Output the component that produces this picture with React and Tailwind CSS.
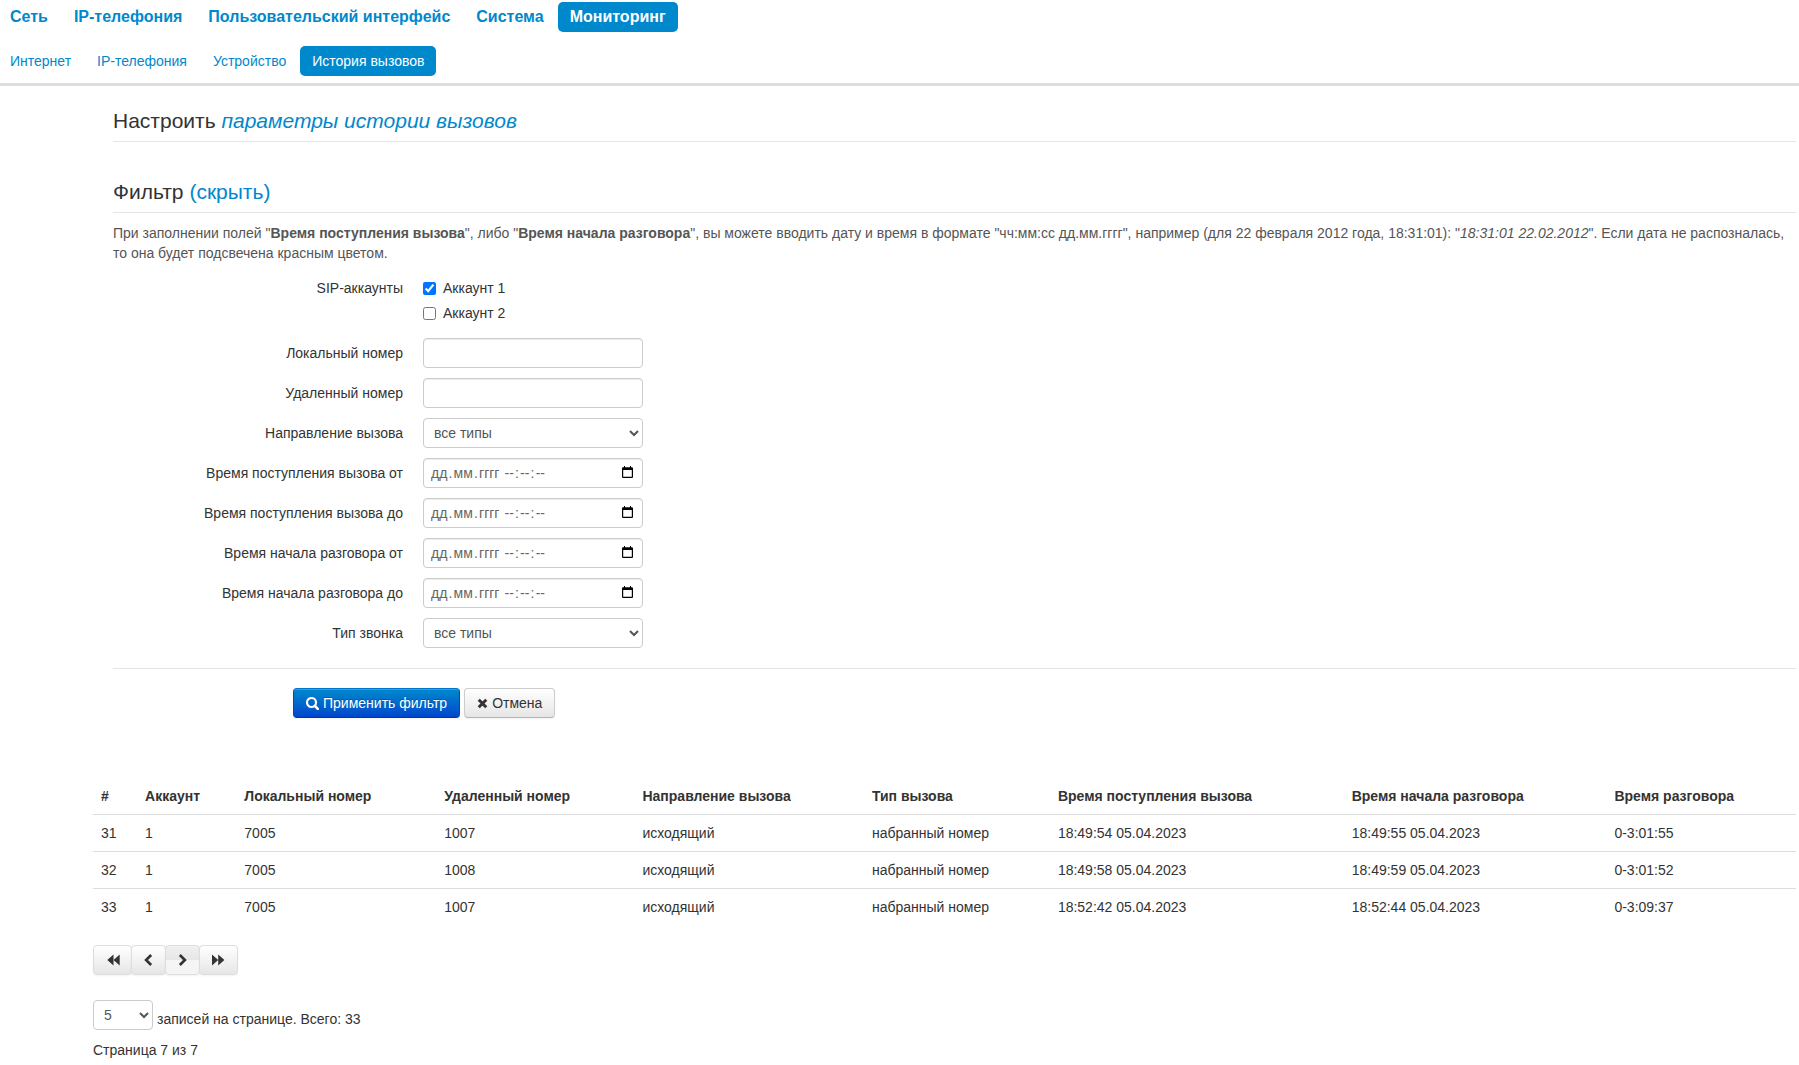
import React, { useState } from 'react';
import clsx from 'clsx';

const sections = ['Сеть', 'IP-телефония', 'Пользовательский интерфейс', 'Система', 'Мониторинг'];
const pages = ['Интернет', 'IP-телефония', 'Устройство', 'История вызовов'];

const columns = [
  '#', 'Аккаунт', 'Локальный номер', 'Удаленный номер', 'Направление вызова', 'Тип вызова',
  'Время поступления вызова', 'Время начала разговора', 'Время разговора',
];

const calls = [
  [31, 1, '7005', '1007', 'исходящий', 'набранный номер', '18:49:54 05.04.2023', '18:49:55 05.04.2023', '0-3:01:55'],
  [32, 1, '7005', '1008', 'исходящий', 'набранный номер', '18:49:58 05.04.2023', '18:49:59 05.04.2023', '0-3:01:52'],
  [33, 1, '7005', '1007', 'исходящий', 'набранный номер', '18:52:42 05.04.2023', '18:52:44 05.04.2023', '0-3:09:37'],
];

// hair spaces keep the date parts slightly apart
const datePlaceholder = 'дд\u200a.\u200aмм\u200a.\u200aгггг\u200a --\u200a:\u200a--\u200a:\u200a--';

const fieldClass = 'block h-[30px] w-[220px] rounded border border-[#ccc] bg-white text-sm text-[#555] shadow-[inset_0_1px_1px_rgba(0,0,0,0.075)]';
const selectClass = 'h-[30px] rounded border border-[#ccc] bg-white px-1.5 text-sm text-[#555]';
const buttonClass = 'flex h-[30px] items-center border border-[#ccc] border-b-[#b3b3b3] bg-linear-to-b from-white to-[#e6e6e6] text-sm shadow-[inset_0_1px_0_rgba(255,255,255,0.2),0_1px_2px_rgba(0,0,0,0.05)]';

function SearchIcon() {
  return (
    <svg viewBox="0 0 13 13" className="size-[13px]" fill="none" stroke="currentColor" aria-hidden="true">
      <circle cx="5.500" cy="5.500" r="4.500" strokeWidth="2.100" />
      <path d="M9 9l2.800 2.800" strokeWidth="2.600" strokeLinecap="round" />
    </svg>
  );
}

function CloseIcon() {
  return (
    <svg viewBox="0 0 11 11" className="size-[11px]" fill="none" stroke="currentColor" strokeWidth="3" aria-hidden="true">
      <path d="M2.800 2.800l5.400 5.400M8.200 2.800l-5.400 5.400" strokeLinecap="square" />
    </svg>
  );
}

function CalendarIcon() {
  return (
    <svg viewBox="0 0 12 13" className="h-[13px] w-3" aria-hidden="true">
      <path d="M.5 1.500h10V4H.5zM2 0h1v2H2zM8 0h1v2H8z" fill="currentColor" />
      <rect x=".6" y="2" width="9.800" height="9.400" rx=".5" fill="none" stroke="currentColor" strokeWidth="1.200" />
    </svg>
  );
}

const pager = [
  { label: 'Первая страница', width: 'w-[39px]', path: 'M6.500 .5v11L.3 6zM12.700 .5v11L6.500 6z' },
  { label: 'Предыдущая страница', width: 'w-[35px]', path: 'M7.200 0 9.100 1.900 5 6l4.100 4.100L7.200 12l-6-6z' },
  { label: 'Следующая страница', width: 'w-[35px]', path: 'M3.800 0 1.900 1.900 6 6l-4.100 4.100L3.800 12l6-6z' },
  { label: 'Последняя страница', width: 'w-[39px]', path: 'M-1 .5v11L5.200 6zM5.200 .5v11L11.400 6z' },
];

function Field({ id, label, children }) {
  return (
    <div className="mb-2.5 flex gap-5">
      <label htmlFor={id} className="w-[290px] pt-[5px] text-right">{label}</label>
      {children}
    </div>
  );
}

function TextField({ id, label }) {
  return (
    <Field id={id} label={label}>
      <input id={id} type="text" className={clsx(fieldClass, 'px-1.5')} />
    </Field>
  );
}

function DateField({ id, label }) {
  return (
    <Field id={id} label={label}>
      <div className="relative">
        <input id={id} type="text" placeholder={datePlaceholder} className={clsx(fieldClass, 'pr-8 pl-[7px] placeholder:text-[#666]')} />
        <button type="button" aria-label="Выбрать дату" className="absolute top-2 right-[9px] text-black">
          <CalendarIcon />
        </button>
      </div>
    </Field>
  );
}

function SelectField({ id, label }) {
  return (
    <Field id={id} label={label}>
      <select id={id} className={clsx(selectClass, 'w-[220px]')}>
        <option>все типы</option>
      </select>
    </Field>
  );
}

export default function App() {
  const [accounts, setAccounts] = useState([true, false]);

  const toggle = (i) => setAccounts(accounts.map((on, n) => (n === i ? !on : on)));

  return (
    <div className="bg-white font-['Liberation_Sans',Arial,sans-serif] text-sm leading-5 text-[#333]">
      <header className="border-b-[3px] border-[#ddd] pt-0.5 pb-[7px]">
        <nav className="flex gap-0.5 text-base leading-5 font-bold">
          {sections.map((s) => (
            <a key={s} href="#" className={clsx('rounded-[5px] py-[5px]', s === 'Мониторинг' ? 'bg-[#08c] px-3 text-white' : 'px-3 text-[#08c] first:pl-2.5')}>{s}</a>
          ))}
        </nav>
        <nav className="mt-3.5 flex gap-0.5">
          {pages.map((p) => (
            <a key={p} href="#" className={clsx('rounded-[5px] py-[5px]', p === 'История вызовов' ? 'bg-[#08c] px-3 text-white' : 'px-3 text-[#08c] first:pl-2.5')}>{p}</a>
          ))}
        </nav>
      </header>

      <main className="pt-[15px] pr-[3px] pb-1 pl-[93px]">
        <div className="pl-5">
          <h2 className="mb-[30px] border-b border-[#e5e5e5] text-[21px] leading-10">
            Настроить <a href="#" className="text-[#08c] italic">параметры истории вызовов</a>
          </h2>

          <form onSubmit={(e) => e.preventDefault()}>
            <h2 className="mb-2.5 border-b border-[#e5e5e5] text-[21px] leading-10">
              Фильтр <a href="#" className="text-[#08c]">(скрыть)</a>
            </h2>
            <p className="mb-2.5 text-[#555]">
              При заполнении полей "<strong>Время поступления вызова</strong>", либо "<strong>Время начала разговора</strong>", вы можете вводить дату и время в формате "чч:мм:сс дд.мм.гггг", например (для 22 февраля 2012 года, 18:31:01): "<em>18:31:01 22.02.2012</em>". Если дата не распозналась, то она будет подсвечена красным цветом.
            </p>

            <fieldset className="mb-2.5 flex gap-5">
              <div className="w-[290px] pt-[5px] text-right">SIP-аккаунты</div>
              <div className="pb-[5px]">
                {accounts.map((on, i) => (
                  <label key={i} className="flex items-center gap-[7px] pt-[5px]">
                    <input type="checkbox" checked={on} onChange={() => toggle(i)} className="size-[13px]" />
                    Аккаунт {i + 1}
                  </label>
                ))}
              </div>
            </fieldset>

            <TextField id="local" label="Локальный номер" />
            <TextField id="remote" label="Удаленный номер" />
            <SelectField id="direction" label="Направление вызова" />
            <DateField id="incomeFrom" label="Время поступления вызова от" />
            <DateField id="incomeTo" label="Время поступления вызова до" />
            <DateField id="startFrom" label="Время начала разговора от" />
            <DateField id="startTo" label="Время начала разговора до" />
            <SelectField id="type" label="Тип звонка" />

            <div className="mt-5 flex gap-1 border-t border-[#e5e5e5] pt-[19px] pl-[180px]">
              <button type="submit" className="flex h-[30px] items-center gap-1 rounded border border-[#04c] border-t-[#0074cc] border-b-[#0037a4] bg-linear-to-b from-[#08c] to-[#04c] px-3 text-sm text-white shadow-[inset_0_1px_0_rgba(255,255,255,0.2),0_1px_2px_rgba(0,0,0,0.05)] text-shadow-[0_-1px_0_rgba(0,0,0,0.25)]">
                <SearchIcon />
                Применить фильтр
              </button>
              <button type="reset" className={clsx(buttonClass, 'gap-1 rounded px-3')}>
                <CloseIcon />
                Отмена
              </button>
            </div>
          </form>
        </div>

        <table className="mt-[60px] mb-5 w-full text-left">
          <thead>
            <tr>
              {columns.map((c) => (
                <th key={c} className="p-2 font-bold">{c}</th>
              ))}
            </tr>
          </thead>
          <tbody>
            {calls.map((row) => (
              <tr key={row[0]} className="border-t border-[#ddd]">
                {row.map((cell, i) => (
                  <td key={i} className="p-2">{cell}</td>
                ))}
              </tr>
            ))}
          </tbody>
        </table>

        <div className="flex">
          {pager.map((p, i) => (
            <button
              key={p.label}
              type="button"
              aria-label={p.label}
              className={clsx(
                'flex h-[30px] items-center justify-center rounded border border-[#ddd] bg-linear-to-b shadow-[inset_0_1px_0_rgba(255,255,255,0.2),0_1px_2px_rgba(0,0,0,0.05)]',
                p.width,
                i === 2 ? 'from-[#f0f0f0] from-0% via-[#e6e6e6] via-50% to-[#f5f5f5] to-50%' : 'from-white to-[#e6e6e6]',
                i > 0 && '-ml-px',
              )}
            >
              <svg viewBox="0 0 12 12" className="size-3 overflow-visible" fill="currentColor" aria-hidden="true">
                <path d={p.path} />
              </svg>
            </button>
          ))}
        </div>

        <div className="mt-[25px] flex gap-1">
          <select id="perPage" className={clsx(selectClass, 'w-[60px]')}>
            <option>5</option>
          </select>
          <label htmlFor="perPage" className="pt-[9px]">записей на странице. Всего: 33</label>
        </div>
        <p className="mt-2.5">Страница 7 из 7</p>
      </main>
    </div>
  );
}
